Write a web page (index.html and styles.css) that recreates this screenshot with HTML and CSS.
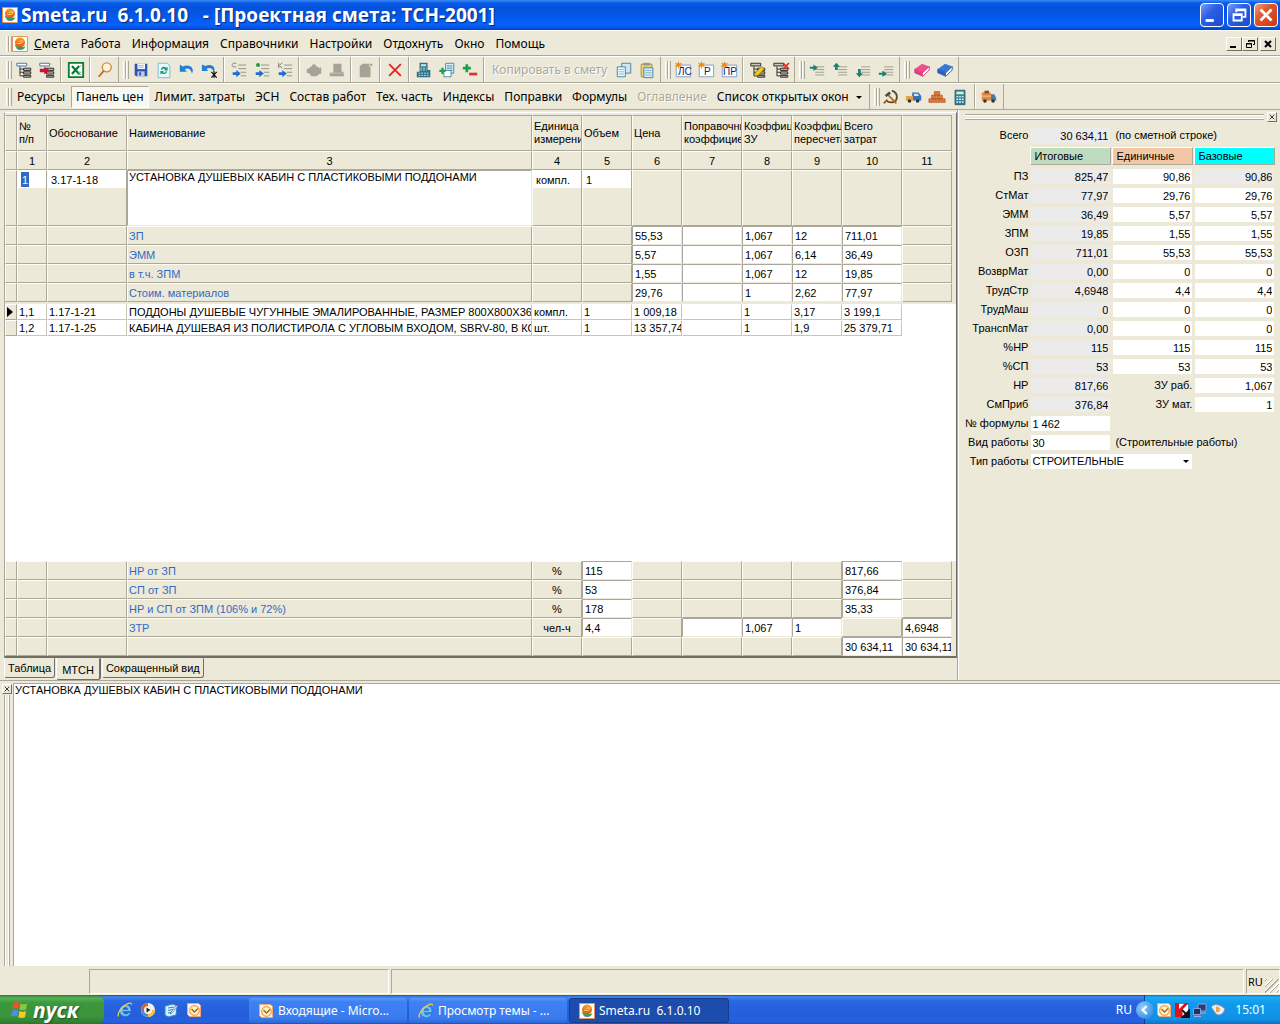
FILE: index.html
```html
<!DOCTYPE html>
<html lang="ru">
<head>
<meta charset="utf-8">
<title>Smeta.ru 6.1.0.10 - [Проектная смета: ТСН-2001]</title>
<link rel="stylesheet" href="styles.css">
</head>
<body>
<svg class="defs" aria-hidden="true">
  <defs>
    <linearGradient id="orb" x1="0" y1="0" x2="0" y2="1"><stop offset="0" stop-color="#f9a51c"/><stop offset=".6" stop-color="#ee6a1c"/><stop offset="1" stop-color="#e2562a"/></linearGradient>
    <symbol id="logo" viewBox="0 0 16 16"><path d="M.5.5h15v15H.5z" fill="#fff" stroke="#e3935c"/><circle cx="8" cy="6.500" r="5" fill="url(#orb)"/><path d="M2.600 8.500c1 4 5 6.500 9.400 4.200l1.600-2.600c-3 1.500-7 1.400-11-1.600z" fill="#3ea04a"/><path d="M4 12.200c2 2 5.500 2.200 7.600.6-2.600.4-5 .2-7.600-.6z" fill="#2c6fd0"/><path d="M5 7c3 1.500 6-.5 6-1.500S8 4.500 7 6" fill="none" stroke="#ffe27a"/></symbol>
    <symbol id="tree" viewBox="0 0 20 20"><path d="M2 2.500h11v3H2z" fill="#fff" stroke="#2a6cb8"/><path d="M5.500 6v10.500H9M5.500 9H9M5.500 12.500H9" fill="none" stroke="#222"/><path d="M9.500 8h8v2.500h-8zM9.500 12h8v2.500h-8zM9.500 16h8v2h-8z" fill="#b8b8b0" stroke="#222"/></symbol>
    <symbol id="tree-in" viewBox="0 0 20 20"><path d="M2 2.500h11v3H2z" fill="#fff" stroke="#2a6cb8"/><path d="M9.500 8h8v2.500h-8zM9.500 12h8v2.500h-8zM9.500 16h8v2h-8z" fill="#b8b8b0" stroke="#222"/><path d="M2 8.500h5V6l6 4.500L7 15v-2.500H2z" fill="#c8142c"/></symbol>
    <symbol id="excel" viewBox="0 0 20 20"><path d="M2 2h16v16H2z" fill="#fff" stroke="#0a7c32" stroke-width="2"/><path d="M5.500 5.500l8 9M13.500 5.500l-8 9" stroke="#0a7c32" stroke-width="2.500"/><path d="M12 12.500h4M12 15h4M14 5.500h2" stroke="#5cb37a"/></symbol>
    <symbol id="search" viewBox="0 0 20 20"><circle cx="12" cy="7" r="5" fill="#fdf3dc" stroke="#d08a3c" stroke-width="1.500"/><path d="M8.500 11L3 17.500" stroke="#c56a1c" stroke-width="2"/></symbol>
    <symbol id="save" viewBox="0 0 20 20"><path d="M3 3h14v14H4.500L3 15.500z" fill="#2d55b0"/><path d="M6 3h8.500v6H6z" fill="#f4f6fb"/><path d="M7 5h6M7 7h6" stroke="#9db0dc"/><path d="M6 11.500h8V17H6z" fill="#bcc8e6"/><path d="M8 12.500h2V16H8z" fill="#2d55b0"/></symbol>
    <symbol id="refresh" viewBox="0 0 20 20"><path d="M3.500 2.500h10l3 3v13h-13z" fill="#e9f6ff" stroke="#6fb8d8"/><path d="M6.500 9.500c.5-3 4-4 6-2l1.500-1v4h-4l1.300-1.300C10 8 8 8.500 8 10zM13.500 11.500c-.5 3-4 4-6 2L6 15v-4h4l-1.300 1.300C10 13.500 12 13 12 11.500z" fill="#1a9a6a"/></symbol>
    <symbol id="undo" viewBox="0 0 20 20"><path d="M2 4v8h8L7.500 9.500c3-2 6.500-1.500 8 4.500 3-5-1-11.500-10.500-8z" fill="#1f7fd6"/></symbol>
    <symbol id="undo-x" viewBox="0 0 20 20"><path d="M1 4v7h7L6 9c3-2 6.500-1.500 8 3 3-4-1-10-9-6.500z" fill="#1f7fd6"/><path d="M14.500 11v8M11.500 12l6 6.500M17.500 12l-6 6.500" stroke="#111" stroke-width="1.300"/></symbol>
    <symbol id="rows" viewBox="0 0 20 20"><path d="M9 4.500h9M9 8.500h9M12 12.500h6M12 16.500h6" stroke="#8a8a80"/><path d="M3 12.500h4V10l5 4-5 4v-2.500H3z" fill="#1c6fd0"/></symbol>
    <symbol id="letter-c" viewBox="0 0 20 20"><path d="M7 2.500H4c-1 0-1.500 1-1.500 2s.5 2 1.500 2h3" fill="none" stroke="#777"/></symbol>
    <symbol id="letter-k" viewBox="0 0 20 20"><path d="M3 2v6M7 2L3.500 5 7 8" fill="none" stroke="#777"/></symbol>
    <symbol id="pot" viewBox="0 0 20 20"><path d="M2 9l3-1 1-2h2V4h4v2h2l2 2 2-1v7l-3 1-2 2H7l-2-3-3-1z" fill="#a5a296"/></symbol>
    <symbol id="blocks" viewBox="0 0 20 20"><path d="M6 3h9v9h2l1 5H2v-4h4z" fill="#a5a296"/><path d="M3 13.500h13" stroke="#c9c6b8"/></symbol>
    <symbol id="scroll" viewBox="0 0 20 20"><path d="M4 5l2-2h11v3h-2v12H3V5z" fill="#a5a296"/><path d="M14 3v3h3" stroke="#ece9d8" fill="none"/></symbol>
    <symbol id="cross" viewBox="0 0 20 20"><path d="M3.500 3.500l13 13M16.500 3.500l-13 13" stroke="#e32222" stroke-width="2"/></symbol>
    <symbol id="machine" viewBox="0 0 20 20"><path d="M5 2h9v8h3v8H2v-6h3z" fill="#2f7186"/><path d="M6.500 3.500h6V6h-6z" fill="#bfe3ea"/><path d="M6 8h7M6 10h7M4 13.500h11M4 16h11" stroke="#cfe8ee" stroke-dasharray="2 1"/></symbol>
    <symbol id="page-plus" viewBox="0 0 20 20"><path d="M8.500 2.500h9v11h-9z" fill="#d8eef8" stroke="#3a86a8"/><path d="M10 5.500h6M10 8h6M10 10.500h6" stroke="#3a86a8"/><path d="M6.500 10.500h8v7h-8z" fill="#fff" stroke="#3a86a8"/><path d="M1.500 11h7M5 7.500v7" stroke="#16a34c" stroke-width="2.500"/></symbol>
    <symbol id="plus-minus" viewBox="0 0 20 20"><path d="M2 8h9M6.500 3.500v9" stroke="#16a34c" stroke-width="3"/><path d="M9 14.500h9" stroke="#e03030" stroke-width="3"/></symbol>
    <symbol id="copy" viewBox="0 0 20 20"><path d="M7.500 2.500h10v11h-10z" fill="#cfe6f2" stroke="#3f7da0"/><path d="M2.500 6.500h9v11h-9z" fill="#eef7fb" stroke="#3f7da0"/><path d="M4 9.500h6M4 12h6M4 14.500h6" stroke="#8cb8cc"/></symbol>
    <symbol id="paste" viewBox="0 0 20 20"><path d="M3.500 3.500h12v14h-12z" fill="#e8d27c" stroke="#a98c2c"/><path d="M6 2h7v3H6z" fill="#8a9aa0"/><path d="M6.500 7.500h10v11h-10z" fill="#d8ecf8" stroke="#3f7da0"/><path d="M8 10.500h7M8 13h7M8 15.500h7" stroke="#7fb0cc"/></symbol>
    <symbol id="sheet" viewBox="0 0 20 20"><path d="M2.500 4.500h16v13h-16z" fill="#fff" stroke="#7a97c8"/></symbol>
    <symbol id="star" viewBox="0 0 20 20"><path d="M5 0l1 2.800L9 2 7.300 4.200 9 6.500 6 6 5 9 4 6 1 6.500l1.700-2.300L1 2l3 .8z" fill="#f08a1c"/></symbol>
    <symbol id="pencil" viewBox="0 0 20 20"><path d="M7 13l7-7 3 3-7 7-4 1z" fill="#f6c818" stroke="#8a5a00" stroke-width=".7"/></symbol>
    <symbol id="tree-sm" viewBox="0 0 20 20"><path d="M2 2.500h11v3H2z" fill="#c8c6b8" stroke="#222"/><path d="M5.500 6v10.500H9M5.500 9H9M5.500 12.500H9" fill="none" stroke="#222"/><path d="M9.500 8h8v2.500h-8zM9.500 12h8v2.500h-8zM9.500 16h8v2h-8z" fill="#b8b8b0" stroke="#222"/></symbol>
    <symbol id="lines" viewBox="0 0 20 20"><path d="M8 6.500h10M8 9.500h10M8 12.500h10M8 15.500h10" stroke="#9a978a"/></symbol>
    <symbol id="go-right" viewBox="0 0 20 20"><path d="M2 6.500h4V4l5 3.500L6 11V8.500H2z" fill="#1c8070"/></symbol>
    <symbol id="go-up" viewBox="0 0 20 20"><path d="M6 2l4 4.500H7.500V10h-3V6.500H2z" fill="#1c8070"/></symbol>
    <symbol id="go-down" viewBox="0 0 20 20"><path d="M6 18l4-4.500H7.500V9h-3v4.500H2z" fill="#1c8070"/></symbol>
    <symbol id="book-pink" viewBox="0 0 20 20"><path d="M2 9l8-6 8 3-7 7z" fill="#f0508c"/><path d="M2 9l9 4 7-7v4l-7 7-9-4z" fill="#fff" stroke="#d02c6c"/><path d="M2 9l9 4v4l-9-4z" fill="#e0407c"/></symbol>
    <symbol id="book-blue" viewBox="0 0 20 20"><path d="M2 9l8-6 8 3-7 7z" fill="#3a78d8"/><path d="M2 9l9 4 7-7v4l-7 7-9-4z" fill="#fff" stroke="#1f50a8"/><path d="M2 9l9 4v4l-9-4z" fill="#2c60c0"/></symbol>
    <symbol id="sickle" viewBox="0 0 20 20"><path d="M11 3c8 3 7 13-1 13-2 0-4-1-5-2" fill="none" stroke="#5a4a2a" stroke-width="2"/><path d="M6 7l10 10" stroke="#b07028" stroke-width="2"/><path d="M3 8l5-4 2 2-5 4z" fill="#4a4a4a"/><path d="M6 13l-4 4" stroke="#a0581c" stroke-width="2"/></symbol>
    <symbol id="truck" viewBox="0 0 20 20"><path d="M8 5h7l3 4v5H8z" fill="#3470c0"/><path d="M10 6.500h4l1.500 2.500H10z" fill="#cfe6f8"/><path d="M1 9h8v5H1z" fill="#e8a03c"/><circle cx="5" cy="14.500" r="2" fill="#333"/><circle cx="14" cy="14.500" r="2" fill="#333"/></symbol>
    <symbol id="bricks" viewBox="0 0 20 20"><path d="M7 4h6v4H7zM4 8h5v4H4zM10 8h6v4h-6zM1 12h6v4H1zM8 12h5v4H8zM14 12h5v4h-5z" fill="#e07a3a" stroke="#b4501c" stroke-width=".7"/></symbol>
    <symbol id="calc" viewBox="0 0 20 20"><path d="M4.500 2.500h11v16h-11z" fill="#3a8098" stroke="#255a70"/><path d="M6 4h8v3H6z" fill="#d8f0c8"/><path d="M6 9.500h8M6 12.500h8M6 15.500h8" stroke="#d4ecf4" stroke-width="1.500" stroke-dasharray="2 1"/></symbol>
    <symbol id="van" viewBox="0 0 20 20"><path d="M2 5h10v9H2z" fill="#e8843c"/><path d="M12 7h4l2 4v3h-6z" fill="#4a78a8"/><path d="M5 3h5v3H5z" fill="#7a5030"/><path d="M2 9h10" stroke="#ffd08c"/><circle cx="5.500" cy="14.500" r="2" fill="#333"/><circle cx="14.500" cy="14.500" r="2" fill="#333"/></symbol>
    <symbol id="ie" viewBox="0 0 16 16"><path d="M14 9.500H6c.3 2 1.800 2.500 3 2.500 1 0 1.800-.5 2.300-1.200h2.500C12.800 13.200 11 14.500 8.500 14.500 5 14.500 2.500 12 2.500 8.700 2.500 5.500 5 2.700 8.500 2.700c3.500 0 5.800 2.600 5.500 6.800zM6 7.400h4.900c-.2-1.300-1.200-2.100-2.500-2.100s-2.100.8-2.400 2.100z" fill="#6cc4f8" stroke="#1c60b8" stroke-width=".5"/><path d="M1.500 14.500C0 12 4 5 9.500 2.300c3-1.500 5.300-1.500 5 .4" fill="none" stroke="#f8c83c" stroke-width="1.300"/></symbol>
    <symbol id="player" viewBox="0 0 16 16"><circle cx="8" cy="8" r="7" fill="#f6efe4"/><path d="M8 1a7 7 0 0 0-7 7h4l3-3z" fill="#e05a28"/><path d="M15 8a7 7 0 0 1-7 7v-4l3-3z" fill="#f4c23c"/><path d="M1 8a7 7 0 0 0 7 7v-4L5 8z" fill="#4a8ad8"/><circle cx="8" cy="8" r="4" fill="#f8f4ec"/><path d="M6.500 5.500v5l4-2.500z" fill="#222"/></symbol>
    <symbol id="desktop" viewBox="0 0 16 16"><path d="M2 4l8-2 4 2-1 9-8 2-3-2z" fill="#d8f0ff" stroke="#2c86c8"/><path d="M5 6l6-1M5 8.500l5-1M5 11l4-1" stroke="#2c86c8"/><path d="M14 3L8 10l-1 2 2-1 6-7z" fill="#fff" stroke="#1c4c8c" stroke-width=".6"/></symbol>
    <symbol id="outlook" viewBox="0 0 16 16"><path d="M1.500 1.500h11l2 2v11h-11l-2-2z" fill="#fdf0dc" stroke="#f0a870"/><circle cx="8.500" cy="8.500" r="4.800" fill="#fff4c0" stroke="#e8a05c" stroke-width="1.200"/><path d="M5.500 7l3 3 3.500-3.500" fill="none" stroke="#a8601c" stroke-width="1.400"/></symbol>
    <symbol id="flag" viewBox="0 0 20 20"><path d="M4 3.500c2-1 3.500-1 5.500 0L8.500 9c-2-1-3.500-1-5.500 0z" fill="#f0512c"/><path d="M10.500 4c2 1 4 1 6 0l-1 5.500c-2 1-4 1-6 0z" fill="#8cc63c"/><path d="M3 10.500c2-1 3.500-1 5.500 0l-1 5.500c-2-1-3.500-1-5.500 0z" fill="#4a90e8"/><path d="M9.500 11c2 1 4 1 6 0l-1 5.500c-2 1-4 1-6 0z" fill="#f8c82c"/></symbol>
    <symbol id="kav" viewBox="0 0 16 16"><path d="M2 2h12v12H2z" fill="#fff"/><path d="M1 1h4v6l6-6h4L8 8l1 7H1z" fill="#d8141c"/><path d="M8 8l6 6M15 9v6H9z" fill="#111" stroke="#111" stroke-width="2"/></symbol>
    <symbol id="net" viewBox="0 0 16 16"><path d="M6 2h8v7H6z" fill="#2c3c70" stroke="#8ca0d8"/><path d="M1.500 6.500h7v6h-7z" fill="#20306c" stroke="#8ca0d8"/><path d="M2 14.500h7M9 11h5" stroke="#a0b0d8"/></symbol>
    <symbol id="sound" viewBox="0 0 16 16"><path d="M1 5c3-4 9-3 14 2-2 6-6 7-9 5z" fill="#e8ecf4" stroke="#7c8cb0"/><path d="M6 4.500c2 0 4 1 4 3s-2 3-4 2.500z" fill="#f0a040"/></symbol>
  </defs>
</svg>

<header class="titlebar">
  <svg class="i16"><use href="#logo"/></svg>
  <h1>Smeta.ru&nbsp; 6.1.0.10&nbsp;&nbsp; - [Проектная смета: ТСН-2001]</h1>
  <div class="winbtns">
    <button aria-label="Свернуть"><svg viewBox="0 0 24 24"><path d="M5 18h9" stroke="#fff" stroke-width="3"/></svg></button>
    <button aria-label="Восстановить"><svg viewBox="0 0 24 24"><path d="M9 9V6h10v8h-3M9 7h10" fill="none" stroke="#fff" stroke-width="2"/><path d="M6 11h9v7H6zM6 12h9" fill="none" stroke="#fff" stroke-width="2"/></svg></button>
    <button class="close" aria-label="Закрыть"><svg viewBox="0 0 24 24"><path d="M6 6l12 12M18 6L6 18" stroke="#fff" stroke-width="3"/></svg></button>
  </div>
</header>

<nav class="bar menu" aria-label="Меню">
  <span class="grip"></span>
  <svg class="i16"><use href="#logo"/></svg>
  <button><u>С</u>мета</button><button>Работа</button><button>Информация</button><button>Справочники</button><button>Настройки</button><button>Отдохнуть</button><button>Окно</button><button>Помощь</button>
  <div class="mdi">
    <button aria-label="Свернуть окно"><svg viewBox="0 0 14 12"><path d="M3 9h6" stroke="#000" stroke-width="2"/></svg></button>
    <button aria-label="Восстановить окно"><svg viewBox="0 0 14 12"><path d="M5.500 4V2.500h6v4H10M5 3h7" fill="none" stroke="#000"/><path d="M3.500 5.500h5v4h-5zM3 6h6" fill="none" stroke="#000"/></svg></button>
    <button class="mdi-close" aria-label="Закрыть окно"><svg viewBox="0 0 14 12"><path d="M4 3l6 6M10 3L4 9" stroke="#000" stroke-width="2"/></svg></button>
  </div>
</nav>

<div class="bar" role="toolbar" aria-label="Правка">
  <div class="band"><span class="grip"></span>
    <button class="tb" aria-label="Структура"><svg><use href="#tree"/></svg></button><button class="tb" aria-label="Вставить в структуру"><svg><use href="#tree-in"/></svg></button><span class="sep"></span>
    <button class="tb" aria-label="Excel"><svg><use href="#excel"/></svg></button><span class="sep"></span>
    <button class="tb" aria-label="Поиск"><svg><use href="#search"/></svg></button>
  </div>
  <div class="band"><span class="grip"></span>
    <button class="tb" aria-label="Сохранить"><svg><use href="#save"/></svg></button><button class="tb" aria-label="Обновить"><svg><use href="#refresh"/></svg></button><button class="tb" aria-label="Отменить"><svg><use href="#undo"/></svg></button><button class="tb" aria-label="Отменить все"><svg><use href="#undo-x"/></svg></button><span class="sep"></span>
    <button class="tb" aria-label="Вставить строку"><svg><use href="#rows"/><use href="#letter-c"/></svg></button><button class="tb" aria-label="Добавить"><svg><use href="#rows"/><circle cx="5" cy="4" r="2" fill="#1c9a3c"/></svg></button><button class="tb" aria-label="Комментарий"><svg><use href="#rows"/><use href="#letter-k"/></svg></button><span class="sep"></span>
    <button class="tb" aria-label="Материалы"><svg><use href="#pot"/></svg></button><button class="tb" aria-label="Оборудование"><svg><use href="#blocks"/></svg></button><span class="sep"></span>
    <button class="tb" aria-label="Примечание"><svg><use href="#scroll"/></svg></button><span class="sep"></span>
    <button class="tb" aria-label="Удалить"><svg><use href="#cross"/></svg></button><span class="sep"></span>
    <button class="tb" aria-label="Пересчитать"><svg><use href="#machine"/></svg></button><button class="tb" aria-label="Добавить лист"><svg><use href="#page-plus"/></svg></button><button class="tb" aria-label="Плюс минус"><svg><use href="#plus-minus"/></svg></button><span class="sep"></span>
    <button class="txt" disabled>Копировать в смету</button><button class="tb" aria-label="Копировать"><svg><use href="#copy"/></svg></button><button class="tb" aria-label="Вставить"><svg><use href="#paste"/></svg></button>
  </div>
  <div class="band"><span class="grip"></span>
    <button class="tb"><svg><use href="#sheet"/><text x="4" y="14">ЛС</text><use href="#star"/></svg></button><button class="tb"><svg><use href="#sheet"/><text x="7" y="14">Р</text><use href="#star"/></svg></button><button class="tb"><svg><use href="#sheet"/><text x="3" y="14">ПР</text><use href="#star"/></svg></button><span class="sep"></span>
    <button class="tb" aria-label="Изменить узел"><svg><use href="#tree-sm"/><use href="#pencil"/></svg></button><button class="tb" aria-label="Удалить узел"><svg><use href="#tree-sm"/><path d="M11 2l6 6M17 2l-6 6" stroke="#e32222" stroke-width="1.500"/></svg></button>
  </div>
  <div class="band"><span class="grip"></span>
    <button class="tb" aria-label="Вправо"><svg><use href="#lines"/><use href="#go-right"/></svg></button><button class="tb" aria-label="Вверх"><svg><use href="#lines"/><use href="#go-up"/></svg></button><button class="tb" aria-label="Вниз"><svg><use href="#lines"/><use href="#go-down"/></svg></button><button class="tb" aria-label="В конец"><svg><use href="#lines"/><use href="#go-right" y="6"/></svg></button>
  </div>
  <div class="band"><span class="grip"></span>
    <button class="tb" aria-label="Справочник 1"><svg><use href="#book-pink"/></svg></button><button class="tb" aria-label="Справочник 2"><svg><use href="#book-blue"/></svg></button>
  </div>
</div>

<div class="bar" role="toolbar" aria-label="Панели">
  <div class="band"><span class="grip"></span>
    <button class="txt">Ресурсы</button><button class="txt pressed" aria-pressed="true">Панель цен</button><button class="txt">Лимит. затраты</button><button class="txt">ЭСН</button><button class="txt">Состав работ</button><button class="txt">Тех. часть</button><button class="txt">Индексы</button><button class="txt">Поправки</button><button class="txt">Формулы</button><button class="txt" disabled>Оглавление</button><button class="txt">Список открытых окон<i class="caret"></i></button>
  </div>
  <div class="band"><span class="grip"></span>
    <button class="tb" aria-label="Труд"><svg><use href="#sickle"/></svg></button><button class="tb" aria-label="Машины"><svg><use href="#truck"/></svg></button><button class="tb" aria-label="Кирпич"><svg><use href="#bricks"/></svg></button><button class="tb" aria-label="Калькулятор"><svg><use href="#calc"/></svg></button><span class="sep"></span>
    <button class="tb" aria-label="Перевозка"><svg><use href="#van"/></svg></button>
  </div>
</div>

<main class="workspace">
  <section class="left">
    <div class="sheet">
      <table class="grid">
        <colgroup><col class="c12"><col class="c30"><col class="c80"><col><col class="c50"><col class="c50"><col class="c50"><col class="c60"><col class="c50"><col class="c50"><col class="c60"><col class="c50"></colgroup>
        <thead>
          <tr class="head"><th></th><th>№<br>п/п</th><th>Обоснование</th><th>Наименование</th><th>Единица<br>измерения</th><th>Объем</th><th>Цена</th><th>Поправочный<br>коэффициент</th><th>Коэффициент<br>ЗУ</th><th>Коэффициент<br>пересчета</th><th>Всего<br>затрат</th><th></th></tr>
          <tr class="nums"><th></th><th>1</th><th>2</th><th>3</th><th>4</th><th>5</th><th>6</th><th>7</th><th>8</th><th>9</th><th>10</th><th>11</th></tr>
        </thead>
        <tbody>
          <tr class="tall"><td></td><td><span class="box"><input class="marked" aria-label="№ п/п" value="1"></span></td><td><span class="box"><input aria-label="Обоснование" value="3.17-1-18"></span></td><td class="edit"><textarea aria-label="Наименование">УСТАНОВКА ДУШЕВЫХ КАБИН С ПЛАСТИКОВЫМИ ПОДДОНАМИ</textarea></td><td><span class="box"><input aria-label="Единица" value="компл."></span></td><td><span class="box"><input aria-label="Объем" value="1"></span></td><td></td><td></td><td></td><td></td><td></td><td></td></tr>
          <tr><td></td><td></td><td></td><td class="blue">ЗП</td><td></td><td></td><td class="edit"><input aria-label="ЗП цена" value="55,53"></td><td class="edit"><input aria-label="ЗП поправка"></td><td class="edit"><input aria-label="ЗП ЗУ" value="1,067"></td><td class="edit"><input aria-label="ЗП пересчет" value="12"></td><td class="edit"><input aria-label="ЗП всего" value="711,01"></td><td></td></tr>
          <tr><td></td><td></td><td></td><td class="blue">ЭММ</td><td></td><td></td><td class="edit"><input aria-label="ЭММ цена" value="5,57"></td><td class="edit"><input aria-label="ЭММ поправка"></td><td class="edit"><input aria-label="ЭММ ЗУ" value="1,067"></td><td class="edit"><input aria-label="ЭММ пересчет" value="6,14"></td><td class="edit"><input aria-label="ЭММ всего" value="36,49"></td><td></td></tr>
          <tr><td></td><td></td><td></td><td class="blue">в т.ч. ЗПМ</td><td></td><td></td><td class="edit"><input aria-label="ЗПМ цена" value="1,55"></td><td class="edit"><input aria-label="ЗПМ поправка"></td><td class="edit"><input aria-label="ЗПМ ЗУ" value="1,067"></td><td class="edit"><input aria-label="ЗПМ пересчет" value="12"></td><td class="edit"><input aria-label="ЗПМ всего" value="19,85"></td><td></td></tr>
          <tr><td></td><td></td><td></td><td class="blue">Стоим. материалов</td><td></td><td></td><td class="edit"><input aria-label="Материалы цена" value="29,76"></td><td class="edit"><input aria-label="Материалы поправка"></td><td class="edit"><input aria-label="Материалы ЗУ" value="1"></td><td class="edit"><input aria-label="Материалы пересчет" value="2,62"></td><td class="edit"><input aria-label="Материалы всего" value="77,97"></td><td></td></tr>
        </tbody>
      </table>
      <div class="records">
        <table class="grid rec">
          <colgroup><col class="c12"><col class="c30"><col class="c80"><col><col class="c50"><col class="c50"><col class="c50"><col class="c60"><col class="c50"><col class="c50"><col class="c60"><col class="c50"></colgroup>
          <tbody>
            <tr><td class="mark"><i class="current"></i></td><td>1,1</td><td>1.17-1-21</td><td>ПОДДОНЫ ДУШЕВЫЕ ЧУГУННЫЕ ЭМАЛИРОВАННЫЕ, РАЗМЕР 800Х800Х360</td><td>компл.</td><td>1</td><td>1 009,18</td><td></td><td>1</td><td>3,17</td><td>3 199,1</td><td class="none"></td></tr>
            <tr><td class="mark"></td><td>1,2</td><td>1.17-1-25</td><td>КАБИНА ДУШЕВАЯ ИЗ ПОЛИСТИРОЛА С УГЛОВЫМ ВХОДОМ, SBRV-80, В КОМ</td><td>шт.</td><td>1</td><td>13 357,74</td><td></td><td>1</td><td>1,9</td><td>25 379,71</td><td class="none"></td></tr>
          </tbody>
        </table>
      </div>
      <table class="grid">
        <colgroup><col class="c12"><col class="c30"><col class="c80"><col><col class="c50"><col class="c50"><col class="c50"><col class="c60"><col class="c50"><col class="c50"><col class="c60"><col class="c50"></colgroup>
        <tbody>
          <tr><td></td><td></td><td></td><td class="blue">НР от ЗП</td><td class="mid">%</td><td class="edit"><input aria-label="НР процент" value="115"></td><td></td><td></td><td></td><td></td><td class="edit"><input aria-label="НР всего" value="817,66"></td><td></td></tr>
          <tr><td></td><td></td><td></td><td class="blue">СП от ЗП</td><td class="mid">%</td><td class="edit"><input aria-label="СП процент" value="53"></td><td></td><td></td><td></td><td></td><td class="edit"><input aria-label="СП всего" value="376,84"></td><td></td></tr>
          <tr><td></td><td></td><td></td><td class="blue">НР и СП от ЗПМ (106% и 72%)</td><td class="mid">%</td><td class="edit"><input aria-label="НР и СП процент" value="178"></td><td></td><td></td><td></td><td></td><td class="edit"><input aria-label="НР и СП всего" value="35,33"></td><td></td></tr>
          <tr><td></td><td></td><td></td><td class="blue">ЗТР</td><td class="mid">чел-ч</td><td class="edit"><input aria-label="ЗТР объем" value="4,4"></td><td></td><td class="edit"><input aria-label="ЗТР поправка"></td><td class="edit"><input aria-label="ЗТР ЗУ" value="1,067"></td><td class="edit"><input aria-label="ЗТР пересчет" value="1"></td><td></td><td class="edit"><input aria-label="ЗТР итог" value="4,6948"></td></tr>
          <tr><td></td><td></td><td></td><td></td><td></td><td></td><td></td><td></td><td></td><td></td><td class="edit"><input aria-label="Итого" value="30 634,11"></td><td class="edit"><input aria-label="Итого с ЗТР" value="30 634,11"></td></tr>
        </tbody>
      </table>
    </div>
    <div class="tabs" role="tablist"><button role="tab">Таблица</button><button role="tab" class="on" aria-selected="true">МТСН</button><button role="tab">Сокращенный вид</button></div>
  </section>

  <aside class="prices">
    <div class="dock"><span></span><button class="x" aria-label="Закрыть панель"><svg viewBox="0 0 8 8"><path d="M1 1l6 6M7 1L1 7" stroke="#000"/></svg></button></div>
    <form class="fields">
      <label for="total">Всего</label><input id="total" class="ro" readonly value="30 634,11"><span class="note">(по сметной строке)</span>
      <span></span><b class="h green">Итоговые</b><b class="h peach">Единичные</b><b class="h aqua">Базовые</b>
      <label for="pz">ПЗ</label><input id="pz" class="ro" readonly value="825,47"><input aria-label="ПЗ единичные" value="90,86"><input class="ro" readonly aria-label="ПЗ базовые" value="90,86">
      <label for="sm">СтМат</label><input id="sm" class="ro" readonly value="77,97"><input aria-label="СтМат единичные" value="29,76"><input aria-label="СтМат базовые" value="29,76">
      <label for="em">ЭММ</label><input id="em" class="ro" readonly value="36,49"><input aria-label="ЭММ единичные" value="5,57"><input aria-label="ЭММ базовые" value="5,57">
      <label for="zpm">ЗПМ</label><input id="zpm" class="ro" readonly value="19,85"><input aria-label="ЗПМ единичные" value="1,55"><input aria-label="ЗПМ базовые" value="1,55">
      <label for="ozp">ОЗП</label><input id="ozp" class="ro" readonly value="711,01"><input aria-label="ОЗП единичные" value="55,53"><input aria-label="ОЗП базовые" value="55,53">
      <label for="vm">ВозврМат</label><input id="vm" class="ro" readonly value="0,00"><input aria-label="ВозврМат единичные" value="0"><input aria-label="ВозврМат базовые" value="0">
      <label for="ts">ТрудСтр</label><input id="ts" class="ro" readonly value="4,6948"><input aria-label="ТрудСтр единичные" value="4,4"><input aria-label="ТрудСтр базовые" value="4,4">
      <label for="tm">ТрудМаш</label><input id="tm" class="ro" readonly value="0"><input aria-label="ТрудМаш единичные" value="0"><input aria-label="ТрудМаш базовые" value="0">
      <label for="tr">ТранспМат</label><input id="tr" class="ro" readonly value="0,00"><input aria-label="ТранспМат единичные" value="0"><input aria-label="ТранспМат базовые" value="0">
      <label for="pnr">%НР</label><input id="pnr" class="ro" readonly value="115"><input aria-label="%НР единичные" value="115"><input aria-label="%НР базовые" value="115">
      <label for="psp">%СП</label><input id="psp" class="ro" readonly value="53"><input aria-label="%СП единичные" value="53"><input aria-label="%СП базовые" value="53">
      <label for="nr">НР</label><input id="nr" class="ro" readonly value="817,66"><label for="zur">ЗУ раб.</label><input id="zur" value="1,067">
      <label for="sp">СмПриб</label><input id="sp" class="ro" readonly value="376,84"><label for="zum">ЗУ мат.</label><input id="zum" value="1">
      <label for="fn">№ формулы</label><input id="fn" class="start" value="1 462"><span class="note"></span>
      <label for="vr">Вид работы</label><input id="vr" class="start" value="30"><span class="note">(Строительные работы)</span>
      <label for="tp">Тип работы</label><span class="pick"><select id="tp"><option>СТРОИТЕЛЬНЫЕ</option></select></span>
    </form>
  </aside>
</main>

<section class="memo">
  <div class="side"><button class="x" aria-label="Закрыть"><svg viewBox="0 0 8 8"><path d="M1 1l6 6M7 1L1 7" stroke="#000"/></svg></button><span></span></div>
  <textarea aria-label="Описание">УСТАНОВКА ДУШЕВЫХ КАБИН С ПЛАСТИКОВЫМИ ПОДДОНАМИ</textarea>
</section>

<div class="status"><span class="s1"></span><span class="s2"></span><span class="s4">RU</span></div>

<footer class="taskbar">
  <button class="start-btn"><svg><use href="#flag"/></svg>пуск</button>
  <div class="quick"><button aria-label="Internet Explorer"><svg class="i16"><use href="#ie"/></svg></button><button aria-label="Проигрыватель"><svg class="i16"><use href="#player"/></svg></button><button aria-label="Рабочий стол"><svg class="i16"><use href="#desktop"/></svg></button><button aria-label="Outlook"><svg class="i16"><use href="#outlook"/></svg></button></div>
  <div class="tasks">
    <button><svg class="i16"><use href="#outlook"/></svg>Входящие - Micro...</button>
    <button><svg class="i16"><use href="#ie"/></svg>Просмотр темы - ...</button>
    <button class="active"><svg class="i16"><use href="#logo"/></svg>Smeta.ru&nbsp; 6.1.0.10</button>
  </div>
  <span class="lang">RU</span>
  <div class="tray"><button class="chev" aria-label="Показать значки"><svg viewBox="0 0 16 16"><path d="M9.500 4.500L6 8l3.500 3.500" fill="none" stroke="#fff" stroke-width="2"/></svg></button><svg class="i16"><use href="#outlook"/></svg><svg class="i16"><use href="#kav"/></svg><svg class="i16"><use href="#net"/></svg><svg class="i16"><use href="#sound"/></svg><time>15:01</time></div>
</footer>
</body>
</html>
```
FILE: styles.css
```css
* { box-sizing: border-box; }
:root {
  --face: #ece9d8;
  --line: #aca899;
  --ui: "Noto Sans", "Open Sans", sans-serif;
  --grid: "Liberation Sans", Arial, sans-serif;
}
body { margin: 0; min-height: 100vh; display: flex; flex-direction: column; background: var(--face); font: 11px/13px var(--grid); color: #000; }
button, input, select, textarea { font: inherit; color: inherit; border: 0; padding: 0; margin: 0; background: none; border-radius: 0; outline: 0; }
button { white-space: nowrap; }
.defs { position: absolute; width: 0; height: 0; }
.i16 { width: 16px; height: 16px; flex: none; }

.titlebar { height: 30px; display: flex; align-items: center; gap: 3px; padding: 0 2px; background: linear-gradient(#3a8cf8 0, #0a5ae8 3px, #0452dc 8px, #0458e8 16px, #0462fa 24px, #0458ee 27px, #0340c0 30px); color: #fff; }
.titlebar h1 { margin: 0; flex: 1; font: bold 19px/24px "Open Sans", "Noto Sans", sans-serif; white-space: pre; text-shadow: 1px 1px 1px #0a2a80; }
.winbtns { display: flex; gap: 3px; }
.winbtns button { width: 24px; height: 24px; border: 1px solid #fff; border-radius: 4px; background: linear-gradient(135deg, #7aa0f4, #2c5fe4 40%, #1c48d0); }
.winbtns svg { display: block; width: 22px; height: 22px; }
.winbtns .close { background: linear-gradient(135deg, #f0a080, #e0532c 40%, #c83c14); }

.bar { display: flex; align-items: stretch; height: 27px; border-bottom: 1px solid var(--line); border-top: 1px solid #fff; padding-left: 2px; font: 12px/16px var(--ui); }
.grip { flex: none; width: 10px; padding: 3px 0; background: linear-gradient(90deg, #fff 1px, var(--face) 1px 2px, var(--line) 2px 3px, #fff 3px 4px, var(--face) 4px 5px, var(--line) 5px 6px) 4px 4px / 6px calc(100% - 7px) no-repeat; }
.menu { height: 26px; padding-top: 1px; align-items: center; }
.menu .grip { height: 100%; }
.menu button { padding: 0 5px 0 6px; }
.mdi { display: flex; margin-left: auto; padding-right: 4px; }
.menu .mdi button { width: 16px; height: 14px; padding: 0; background: var(--face); border: 1px solid; border-color: #fff #716f64 #716f64 #fff; }
.menu .mdi .mdi-close { margin-left: 2px; }
.mdi svg { display: block; width: 14px; height: 12px; }

.band { display: flex; align-items: center; padding-right: 2px; border-right: 1px solid var(--line); }
.band .grip { height: 100%; }
.tb { width: 23px; height: 22px; display: grid; place-items: center; }
.tb svg { width: 18px; height: 18px; overflow: visible; }
.tb text { font: 10px var(--grid); fill: #16206c; }
.sep { width: 6px; height: 100%; background: linear-gradient(90deg, var(--line) 1px, #fff 1px) 2px 0 / 2px 100% no-repeat; }
.txt { padding: 0 5px; height: 22px; }
.txt:disabled { color: var(--line); text-shadow: 1px 1px 0 #fff; }
.txt.pressed { background: #f8f7f0; border: 1px solid; border-color: var(--line) #fff #fff var(--line); padding: 0 4px; margin: 0 1px; }
.caret { display: inline-block; margin-left: 7px; vertical-align: middle; border: 3px solid transparent; border-top-color: #000; border-bottom: 0; }

.workspace { flex: 1; display: flex; min-height: 570px; }
.left { flex: 1; min-width: 0; display: flex; flex-direction: column; border-right: 1px solid var(--line); }
.sheet { flex: 1; display: flex; flex-direction: column; margin-top: 2px; padding: 2px 4px 0 0; border: solid #716f64; border-width: 1px 1px 2px 0; border-top-color: #fff; margin-left: 4px; border-left: 1px solid var(--line); }
.grid { width: 100%; table-layout: fixed; border-collapse: separate; border-spacing: 0; }
.c12 { width: 12px; } .c30 { width: 30px; } .c50 { width: 50px; } .c60 { width: 60px; } .c80 { width: 80px; }
.grid td, .grid th { height: 19px; padding: 1px 1px 0; text-align: left; font-weight: normal; white-space: nowrap; overflow: hidden; border: 1px solid; border-color: #fffdf2 var(--line) var(--line) #fffdf2; }
.grid .head th { height: 36px; padding-top: 0; border-top-color: var(--line); }
.grid .nums th { text-align: center; }
.grid .tall td { height: 56px; vertical-align: top; padding: 0; }
.grid td.blue { color: #316ac5; }
.grid td.mid { text-align: center; }
.grid td.edit { padding: 0; background: #fff; border-color: var(--line) var(--face) var(--face) var(--line); }
.grid input { display: block; width: 100%; height: 15px; padding-left: 2px; }
.grid textarea { display: block; width: 100%; height: 54px; resize: none; padding-left: 1px; overflow: hidden; }
.box { display: block; padding: 1px; background: #fff; }
.grid .marked { width: 8px; padding: 0 0 0 1px; margin-left: 2px; background: #316ac5; color: #fff; }
.records { flex: 1; background: #fff; border-top: 2px solid var(--face); margin-right: -4px; padding-right: 4px; }
.grid.rec td { height: 16px; padding: 0 1px; border-color: #fff #c8c5b8 #c8c5b8 #fff; line-height: 13px; }
.grid.rec .mark { background: var(--face); border-color: #fff var(--line) var(--line) #fff; }
.grid.rec .none { border-color: #fff; }
.current { display: block; width: 0; border: 5px solid transparent; border-left: 6px solid #000; border-right: 0; }
.tabs { height: 22px; display: flex; align-items: flex-start; gap: 1px; padding: 0 4px; }
.tabs button { height: 20px; padding: 0 3px; border: 1px solid; border-color: transparent #716f64 #716f64 #fff; border-radius: 0 0 3px 3px; }
.tabs .on { height: 22px; padding: 2px 5px 0; border-right-width: 2px; }

.prices { flex: none; width: 322px; padding: 0 3px 0 6px; border-left: 1px solid #fff; }
.dock { display: flex; align-items: center; gap: 3px; height: 14px; }
.dock span { flex: 1; height: 6px; border: solid var(--line); border-width: 1px 0; background: linear-gradient(#fff 1px, transparent 1px 3px, #fff 3px); }
.x { width: 10px; height: 10px; border: 1px solid; border-color: #fff #716f64 #716f64 #fff; display: grid; place-items: center; }
.x svg { width: 6px; height: 6px; }
.fields { display: grid; grid-template-columns: 1fr 79px 79px 79px; grid-template-rows: 19px 22px; grid-auto-rows: 19px; column-gap: 3px; align-items: center; padding: 2px 4px 0 0; }
.fields label { text-align: right; white-space: nowrap; }
.fields input { width: 100%; height: 15px; background: #fff; text-align: right; padding-right: 2px; }
.fields .ro { background: #ebebeb; }
.fields .start { text-align: left; padding-left: 1px; }
.note { grid-column: 3 / span 2; padding-left: 2px; }
.h { height: 18px; margin: 0 -1px; padding: 2px 3px; font-weight: normal; border: 1px solid; border-color: #fff var(--line) var(--line) #fff; }
.green { background: #c0dcc0; } .peach { background: #f4c7a4; } .aqua { background: #00ffff; }
.pick { grid-column: 2 / span 2; position: relative; }
.pick select { display: block; width: 100%; height: 15px; appearance: none; background: #fff; padding-left: 1px; }
.pick::after { content: ""; position: absolute; right: 3px; top: 6px; border: 3px solid transparent; border-top-color: #000; border-bottom: 0; }

.memo { display: flex; height: 286px; border-top: 1px solid var(--line); padding-top: 2px; }
.side { width: 13px; display: flex; flex-direction: column; align-items: center; gap: 1px; padding-top: 1px; }
.side span { flex: 1; width: 6px; border: solid var(--line); border-width: 0 1px; background: linear-gradient(90deg, #fff 1px, transparent 1px 3px, #fff 3px); }
.memo textarea { flex: 1; background: #fff; resize: none; padding: 0 1px; border: 1px solid var(--line); border-width: 1px 0 0 1px; }

.status { display: flex; gap: 2px; height: 29px; padding: 3px 0 1px 89px; }
.status span { border: 1px solid; border-color: var(--line) #fff #fff var(--line); }
.s1 { width: 300px; } .s2 { flex: 1; }
.status .s4 { width: 34px; padding: 4px 0 0 1px; background: repeating-linear-gradient(135deg, #fff 0 1px, var(--line) 1px 2px, var(--face) 2px 4px) right bottom / 14px 14px no-repeat; clip-path: polygon(0 0, 100% 0, 100% 100%, 0 100%); font: 11px/16px var(--ui); }

.taskbar { display: flex; align-items: stretch; height: 30px; color: #fff; font: 12px/16px var(--ui); background: linear-gradient(#1c50b8 0, #4088f0 2px, #2a66e0 6px, #245edc 20px, #2460e0 27px, #1c48a8 30px); }
.start-btn { width: 104px; display: flex; align-items: center; gap: 2px; padding-left: 9px; border-radius: 0 8px 8px 0; background: linear-gradient(#2c7a2c 0, #58b058 3px, #3c983c 8px, #3a943a 22px, #2a742a 30px); font: italic bold 21px/24px "Open Sans", "Noto Sans", sans-serif; text-shadow: 1px 1px 2px #1c4c1c; }
.start-btn svg { width: 22px; height: 22px; }
.quick { display: flex; align-items: center; gap: 7px; padding-left: 13px; width: 145px; }
.quick svg, .tray svg { display: block; }
.tasks { flex: 1; display: flex; gap: 2px; padding: 3px 0 2px; }
.tasks button { width: 158px; display: flex; align-items: center; gap: 4px; padding: 0 9px; border-radius: 3px; background: linear-gradient(#5a98f8 0, #3c80f4 4px, #3a7cf0 20px, #2c68d8); }
.tasks .active { background: #1c4cac; border: 1px solid #163c90; width: 160px; }
.lang { align-self: center; margin-right: 12px; }
.tray { display: flex; align-items: center; gap: 2px; width: 136px; padding-right: 14px; background: linear-gradient(#0c6cc8 0, #1cacf4 2px, #129aec 8px, #1090e4 24px, #0c6cc0 30px); border-left: 1px solid #0a3c90; }
.chev { width: 18px; height: 18px; margin-left: -9px; border-radius: 50%; background: radial-gradient(circle at 35% 35%, #8cd0fc, #1c78dc); }
.tray time { margin-left: auto; }
```
